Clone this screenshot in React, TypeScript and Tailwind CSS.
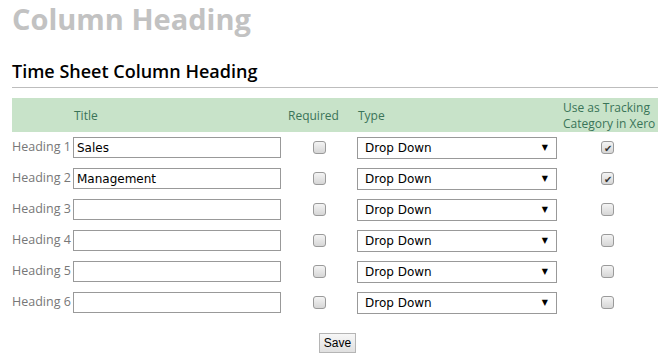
import React from "react";

const rows = [
  { label: "Heading 1", title: "Sales", tracking: true },
  { label: "Heading 2", title: "Management", tracking: true },
  { label: "Heading 3", title: "", tracking: false },
  { label: "Heading 4", title: "", tracking: false },
  { label: "Heading 5", title: "", tracking: false },
  { label: "Heading 6", title: "", tracking: false },
];

const Box = ({ checked }: { checked: boolean }) => (
  <span className="flex h-[13px] w-[13px] items-center justify-center rounded-[3px] border border-[#9a9a9a] bg-gradient-to-b from-[#f4f4f4] to-[#d6d6d6] text-[10px] leading-none text-[#333]">
    {checked ? "✔" : ""}
  </span>
);

const App = () => {
  return (
    <div className="h-[358px] w-[662px] bg-white pl-3 pr-1 font-['Open_Sans',sans-serif]">
      <h1 className="text-[29px] font-bold leading-[38px] text-[#c2c2c2]">
        Column Heading
      </h1>
      <h2 className="mt-[21px] text-[18px] font-semibold leading-[24px] text-black">
        Time Sheet Column Heading
      </h2>
      <div className="mt-[4px] h-px w-[646px] bg-[#bdbdbd]" />

      {/* header band */}
      <div className="mt-[10px] flex h-[34px] w-[646px] items-center bg-[#c8e3c9] pt-[1px] text-[12px] text-[#3a7458]">
        <div className="w-[62px]" />
        <div className="w-[214px]">Title</div>
        <div className="w-[70px]">Required</div>
        <div className="w-[205px]">Type</div>
        <div className="leading-[16px]">
          Use as Tracking
          <br />
          Category in Xero
        </div>
      </div>

      {rows.map((r) => (
        <div key={r.label} className="flex h-[31px] items-center">
          <div className="w-[61px] text-[12.5px] text-[#777]">{r.label}</div>
          <div className="flex h-[21px] w-[208px] items-center border border-[#999] px-[3px] font-['DejaVu_Sans',sans-serif] text-[12px] leading-none text-black">
            {r.title}
          </div>
          <div className="flex w-[76px] justify-center">
            <Box checked={false} />
          </div>
          <div className="flex h-[22px] w-[200px] items-center justify-between border border-[#999] pl-[7px] pr-[8px] font-['DejaVu_Sans',sans-serif] text-[12px] leading-none text-black">
            <span>Drop Down</span>
            <span className="text-[8px]">▼</span>
          </div>
          <div className="flex w-[101px] justify-center">
            <Box checked={r.tracking} />
          </div>
        </div>
      ))}

      <div className="mt-[15px] flex w-[646px] justify-center pl-[5px]">
        <button className="h-[20px] w-[37px] border border-[#b5b5b5] bg-gradient-to-b from-[#f7f7f7] to-[#e0e0e0] font-['Liberation_Sans',sans-serif] text-[12px] leading-none text-black">
          Save
        </button>
      </div>
    </div>
  );
};

export default App;
